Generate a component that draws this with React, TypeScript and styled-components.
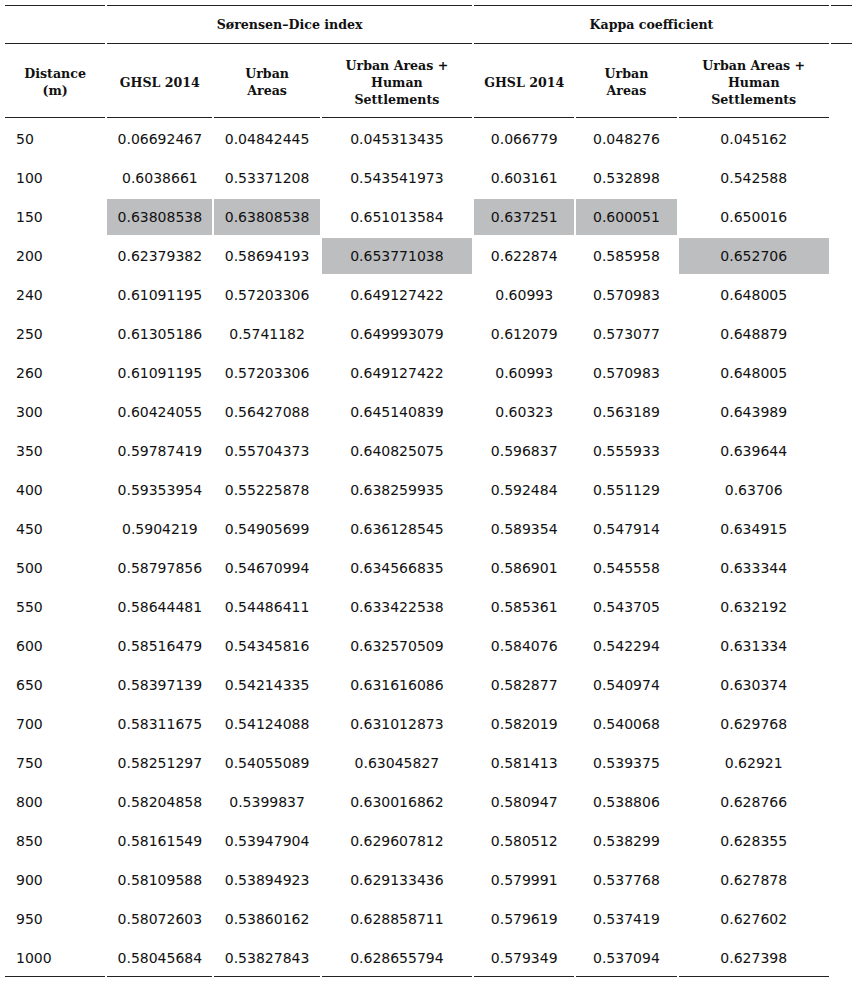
import React from "react";
import styled, { createGlobalStyle } from "styled-components";

const Global = createGlobalStyle`
  html, body { margin: 0; padding: 0; background: #ffffff; overflow: hidden; }
  body { font-family: "DejaVu Sans", Verdana, sans-serif; color: #111; }
`;

const Table = styled.table`
  table-layout: fixed;
  width: 851px;
  margin: 2px 0 0 3px;
  border-collapse: separate;
  border-spacing: 2px 3px;
`;

const HeadCell = styled.th<{ $top?: boolean; $h: number }>`
  height: ${(p) => p.$h}px;
  padding: 0 2px;
  box-sizing: border-box;
  font-family: "DejaVu Serif", "Liberation Serif", serif;
  font-weight: bold;
  font-size: 12.6px;
  line-height: 17px;
  color: #111;
  text-align: center;
  vertical-align: middle;
  border-top: ${(p) => (p.$top ? "1px solid #222" : "none")};
  border-bottom: 1px solid #222;
`;

const Cell = styled.td<{ $hl?: boolean; $left?: boolean; $last?: boolean }>`
  height: ${(p) => (p.$last ? 37 : 36)}px;
  padding: ${(p) => (p.$left ? "0 0 0 11px" : "0")};
  box-sizing: border-box;
  font-family: "DejaVu Sans", Verdana, sans-serif;
  font-size: 14px;
  color: #111;
  text-align: ${(p) => (p.$left ? "left" : "center")};
  vertical-align: middle;
  background: ${(p) => (p.$hl ? "#bdbec0" : "transparent")};
  border-bottom: ${(p) => (p.$last ? "1px solid #222" : "none")};
`;

type Row = { d: string; v: string[]; hl?: number[] };

const rows: Row[] = [
  { d: "50", v: ["0.06692467", "0.04842445", "0.045313435", "0.066779", "0.048276", "0.045162"] },
  { d: "100", v: ["0.6038661", "0.53371208", "0.543541973", "0.603161", "0.532898", "0.542588"] },
  { d: "150", v: ["0.63808538", "0.63808538", "0.651013584", "0.637251", "0.600051", "0.650016"], hl: [0, 1, 3, 4] },
  { d: "200", v: ["0.62379382", "0.58694193", "0.653771038", "0.622874", "0.585958", "0.652706"], hl: [2, 5] },
  { d: "240", v: ["0.61091195", "0.57203306", "0.649127422", "0.60993", "0.570983", "0.648005"] },
  { d: "250", v: ["0.61305186", "0.5741182", "0.649993079", "0.612079", "0.573077", "0.648879"] },
  { d: "260", v: ["0.61091195", "0.57203306", "0.649127422", "0.60993", "0.570983", "0.648005"] },
  { d: "300", v: ["0.60424055", "0.56427088", "0.645140839", "0.60323", "0.563189", "0.643989"] },
  { d: "350", v: ["0.59787419", "0.55704373", "0.640825075", "0.596837", "0.555933", "0.639644"] },
  { d: "400", v: ["0.59353954", "0.55225878", "0.638259935", "0.592484", "0.551129", "0.63706"] },
  { d: "450", v: ["0.5904219", "0.54905699", "0.636128545", "0.589354", "0.547914", "0.634915"] },
  { d: "500", v: ["0.58797856", "0.54670994", "0.634566835", "0.586901", "0.545558", "0.633344"] },
  { d: "550", v: ["0.58644481", "0.54486411", "0.633422538", "0.585361", "0.543705", "0.632192"] },
  { d: "600", v: ["0.58516479", "0.54345816", "0.632570509", "0.584076", "0.542294", "0.631334"] },
  { d: "650", v: ["0.58397139", "0.54214335", "0.631616086", "0.582877", "0.540974", "0.630374"] },
  { d: "700", v: ["0.58311675", "0.54124088", "0.631012873", "0.582019", "0.540068", "0.629768"] },
  { d: "750", v: ["0.58251297", "0.54055089", "0.63045827", "0.581413", "0.539375", "0.62921"] },
  { d: "800", v: ["0.58204858", "0.5399837", "0.630016862", "0.580947", "0.538806", "0.628766"] },
  { d: "850", v: ["0.58161549", "0.53947904", "0.629607812", "0.580512", "0.538299", "0.628355"] },
  { d: "900", v: ["0.58109588", "0.53894923", "0.629133436", "0.579991", "0.537768", "0.627878"] },
  { d: "950", v: ["0.58072603", "0.53860162", "0.628858711", "0.579619", "0.537419", "0.627602"] },
  { d: "1000", v: ["0.58045684", "0.53827843", "0.628655794", "0.579349", "0.537094", "0.627398"] },
];

const widths = [100, 105, 105, 150, 100, 100, 150, 21];

export default function App() {
  return (
    <>
      <Global />
      <Table>
        <colgroup>
          {widths.map((w, i) => (
            <col key={i} style={{ width: w }} />
          ))}
        </colgroup>
        <thead>
          <tr>
            <HeadCell $top $h={39} />
            <HeadCell $top $h={39} colSpan={3}>Sørensen–Dice index</HeadCell>
            <HeadCell $top $h={39} colSpan={3}>Kappa coefficient</HeadCell>
            <HeadCell $top $h={39} />
          </tr>
          <tr>
            <HeadCell $h={71}>Distance<br />(m)</HeadCell>
            <HeadCell $h={71}>GHSL 2014</HeadCell>
            <HeadCell $h={71}>Urban<br />Areas</HeadCell>
            <HeadCell $h={71}>Urban Areas +<br />Human<br />Settlements</HeadCell>
            <HeadCell $h={71}>GHSL 2014</HeadCell>
            <HeadCell $h={71}>Urban<br />Areas</HeadCell>
            <HeadCell $h={71}>Urban Areas +<br />Human<br />Settlements</HeadCell>
          </tr>
        </thead>
        <tbody>
          {rows.map((r, ri) => {
            const last = ri === rows.length - 1;
            return (
              <tr key={r.d}>
                <Cell $left $last={last}>{r.d}</Cell>
                {r.v.map((x, ci) => (
                  <Cell key={ci} $last={last} $hl={r.hl?.includes(ci)}>
                    {x}
                  </Cell>
                ))}
              </tr>
            );
          })}
        </tbody>
      </Table>
    </>
  );
}
